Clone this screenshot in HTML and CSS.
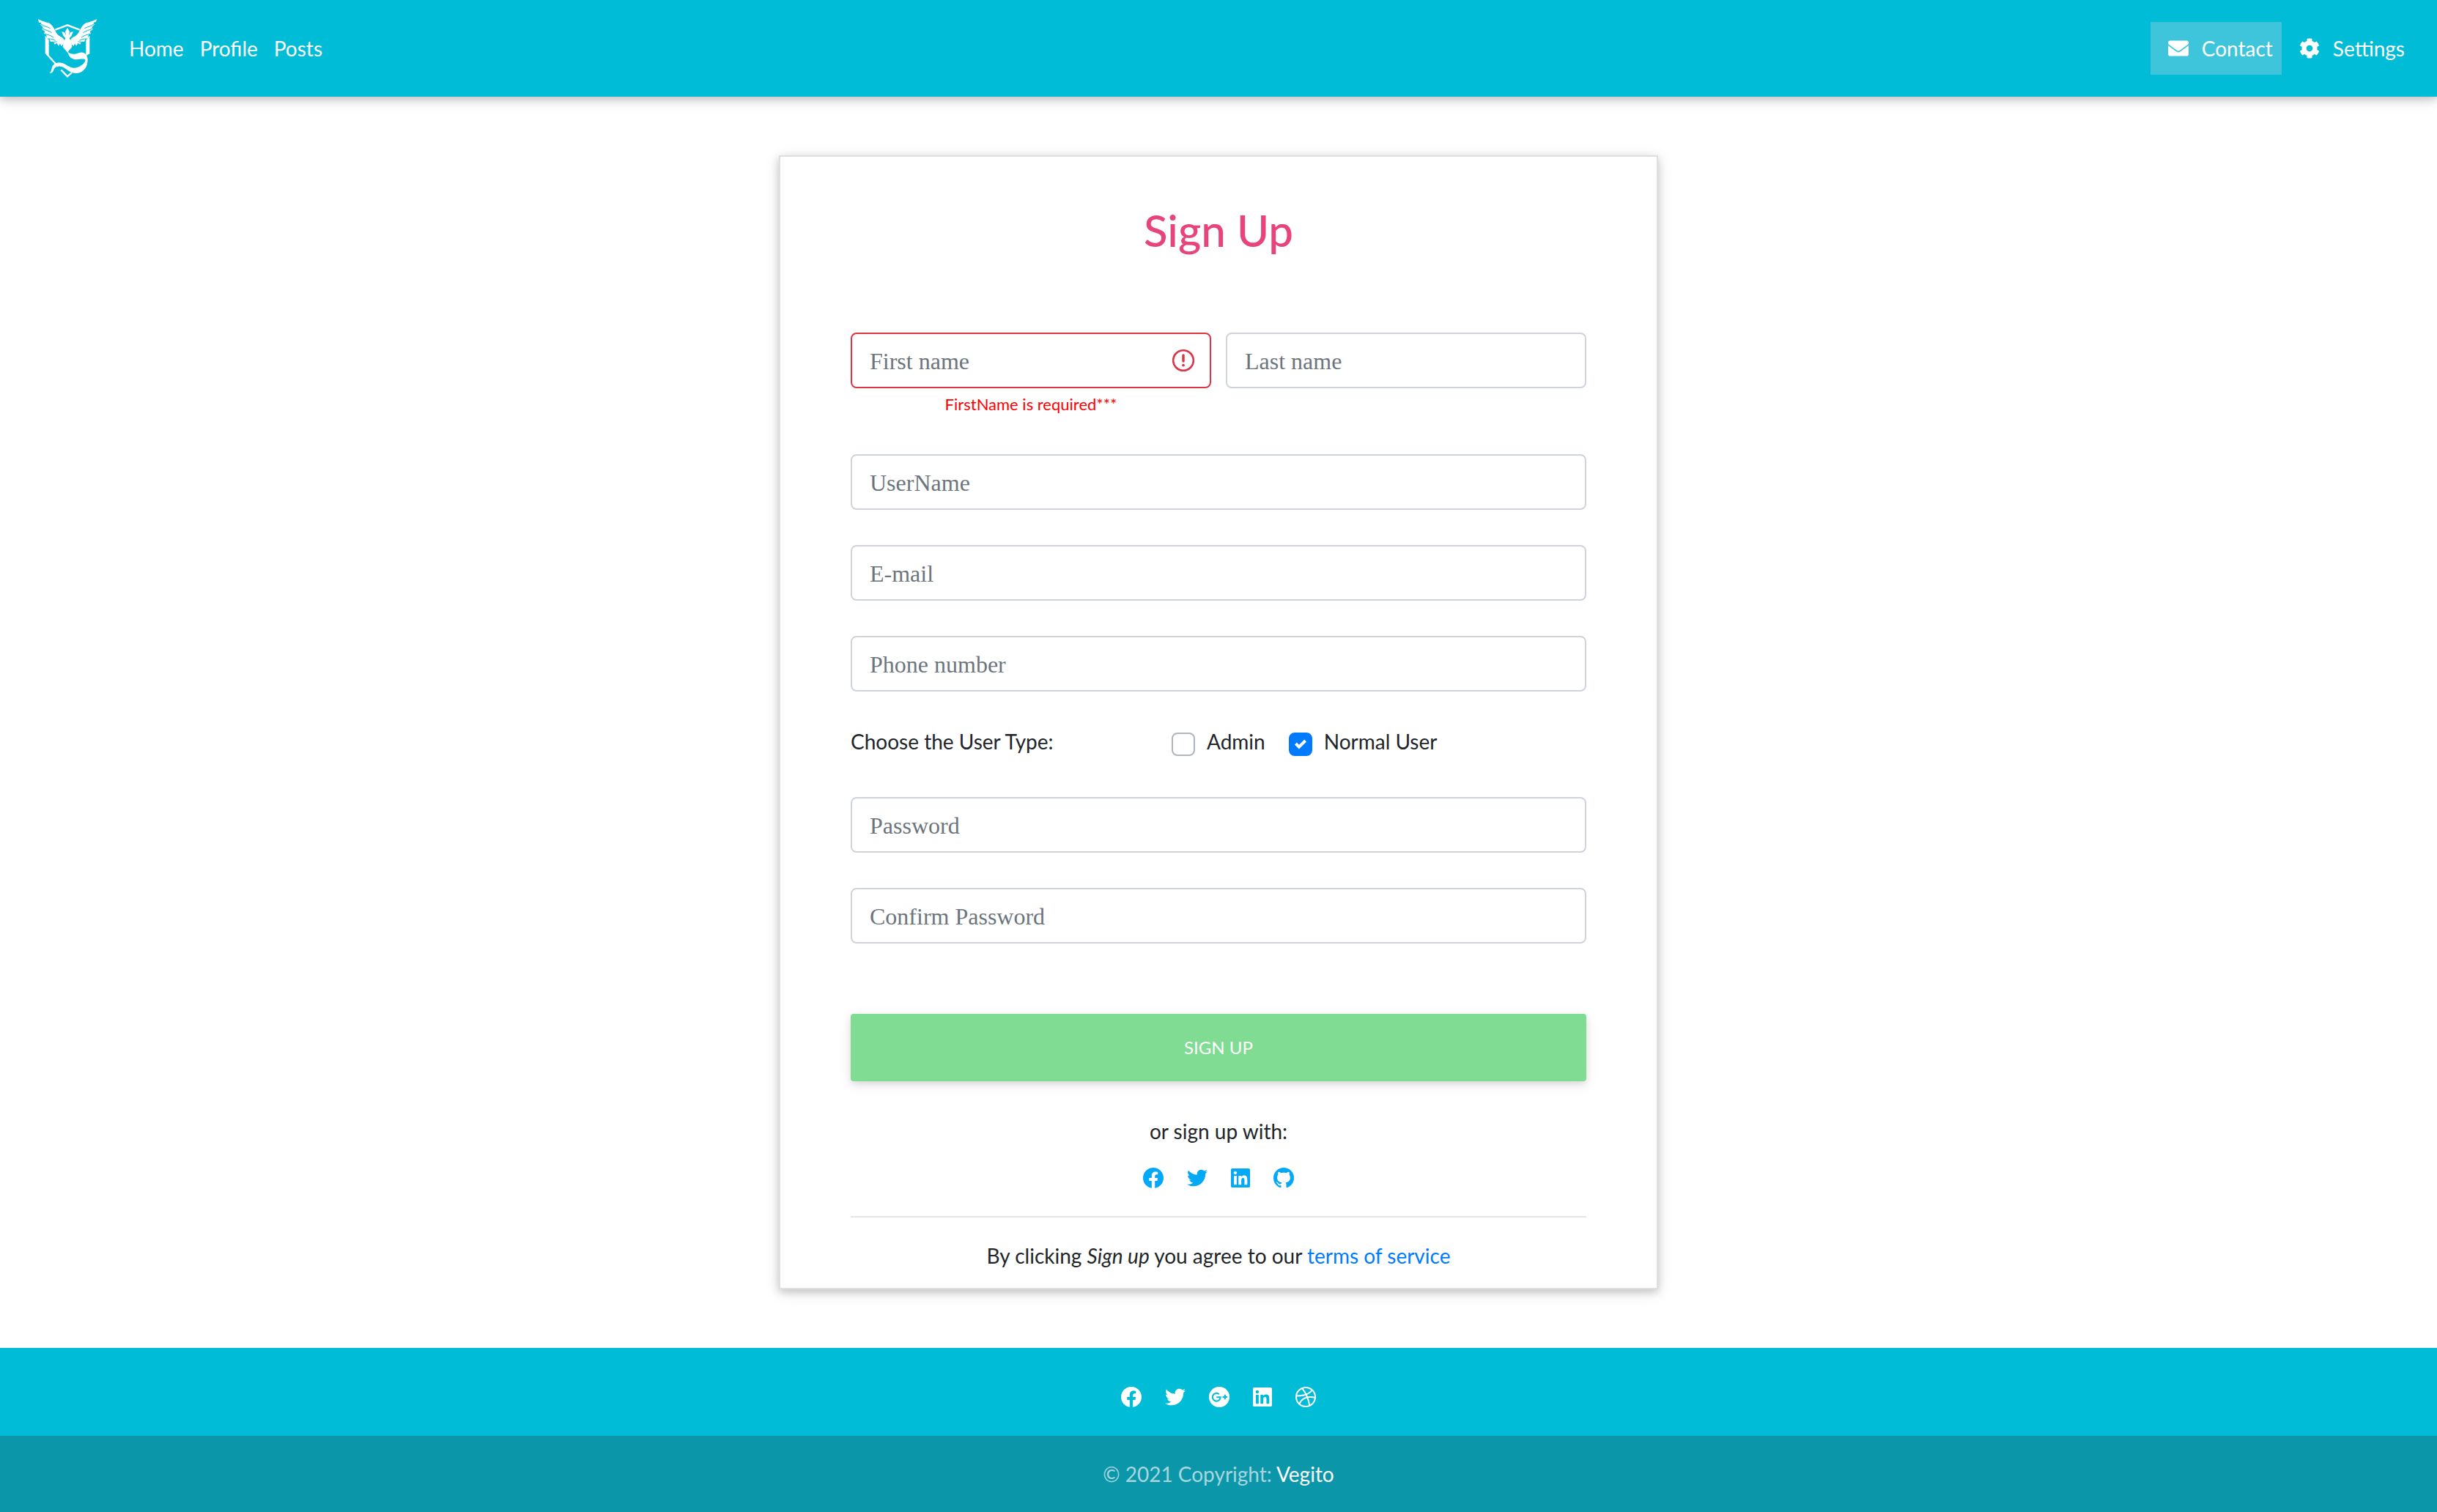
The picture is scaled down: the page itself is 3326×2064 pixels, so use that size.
FILE: index.html
```html
<!DOCTYPE html>
<html lang="en">
<head>
<meta charset="utf-8">
<title>Sign Up</title>
<link rel="stylesheet" href="styles.css">
</head>
<body>
<svg class="sprite" aria-hidden="true">
  <symbol id="facebook" viewBox="8 8 496 496"><path d="M504 256C504 119 393 8 256 8S8 119 8 256c0 123.78 90.69 226.38 209.25 245V327.69h-63V256h63v-54.64c0-62.15 37-96.48 93.67-96.48 27.14 0 55.52 4.84 55.52 4.84v61h-31.28c-30.8 0-40.41 19.12-40.41 38.73V256h68.78l-11 71.69h-57.78V501C413.31 482.38 504 379.78 504 256z"/></symbol>
  <symbol id="twitter" viewBox="0 0 512 512"><path d="M459.37 151.716c.325 4.548.325 9.097.325 13.645 0 138.72-105.583 298.558-298.558 298.558-59.452 0-114.68-17.219-161.137-47.106 8.447.974 16.568 1.299 25.34 1.299 49.055 0 94.213-16.568 130.274-44.832-46.132-.975-84.792-31.188-98.112-72.772 6.498.974 12.995 1.624 19.818 1.624 9.421 0 18.843-1.3 27.614-3.573-48.081-9.747-84.143-51.98-84.143-102.985v-1.299c13.969 7.797 30.214 12.67 47.431 13.319-28.264-18.843-46.781-51.005-46.781-87.391 0-19.492 5.197-37.36 14.294-52.954 51.655 63.675 129.3 105.258 216.365 109.807-1.624-7.797-2.599-15.918-2.599-24.04 0-57.828 46.782-104.934 104.934-104.934 30.213 0 57.502 12.67 76.67 33.137 23.715-4.548 46.456-13.32 66.599-25.34-7.798 24.366-24.366 44.833-46.132 57.827 21.117-2.273 41.584-8.122 60.426-16.243-14.292 20.791-32.161 39.308-52.628 54.253z"/></symbol>
  <symbol id="linkedin" viewBox="0 32 448 448"><path d="M416 32H31.9C14.3 32 0 46.5 0 64.3v383.4C0 465.5 14.3 480 31.9 480H416c17.6 0 32-14.5 32-32.3V64.3c0-17.8-14.4-32.3-32-32.3zM135.4 416H69V202.2h66.5V416zm-33.2-243c-21.3 0-38.5-17.3-38.5-38.5S80.9 96 102.2 96c21.2 0 38.5 17.3 38.5 38.5 0 21.3-17.2 38.5-38.5 38.5zm282.1 243h-66.4V312c0-24.8-.5-56.7-34.5-56.7-34.6 0-39.9 27-39.9 54.9V416h-66.4V202.2h63.7v29.2h.9c8.9-16.8 30.6-34.5 62.9-34.5 67.2 0 79.7 44.3 79.7 101.9V416z"/></symbol>
  <symbol id="github" viewBox="2 2 20 20"><path d="M12,2A10,10 0 0,0 2,12C2,16.42 4.87,20.17 8.84,21.5C9.34,21.58 9.5,21.27 9.5,21C9.5,20.77 9.5,20.14 9.5,19.31C6.73,19.91 6.14,17.97 6.14,17.97C5.68,16.81 5.03,16.5 5.03,16.5C4.12,15.88 5.1,15.9 5.1,15.9C6.1,15.97 6.63,16.93 6.63,16.93C7.5,18.45 8.97,18 9.54,17.76C9.63,17.11 9.89,16.67 10.17,16.42C7.95,16.17 5.62,15.31 5.62,11.5C5.62,10.39 6,9.5 6.65,8.79C6.55,8.54 6.2,7.5 6.75,6.15C6.75,6.15 7.59,5.88 9.5,7.17C10.29,6.95 11.15,6.84 12,6.84C12.85,6.84 13.71,6.95 14.5,7.17C16.41,5.88 17.25,6.15 17.25,6.15C17.8,7.5 17.45,8.54 17.35,8.79C18,9.5 18.38,10.39 18.38,11.5C18.38,15.32 16.04,16.16 13.81,16.41C14.17,16.72 14.5,17.33 14.5,18.26C14.5,19.6 14.5,20.68 14.5,21C14.5,21.27 14.66,21.59 15.17,21.5C19.14,20.16 22,16.42 22,12A10,10 0 0,0 12,2Z"/></symbol>
  <symbol id="google-plus" viewBox="0 0 28 28"><circle cx="14" cy="14" r="14"/><path d="M13.8 10.2A5.4 5.4 0 1 0 15.6 14.2H10.2M21.8 10.8v6.4M18.6 14h6.4" fill="none" stroke="#00bcd7" stroke-width="2.1"/></symbol>
  <symbol id="dribbble" viewBox="0 0 28 28"><g fill="none" stroke="currentColor" stroke-width="2"><circle cx="14" cy="14" r="13"/><path d="M9 2.2C14 8 17.500 15 19.300 25.800M1.200 12.500C9 12.700 17.500 11.500 23 4.500M5.200 23.500C9 15.500 17 12.500 27 14.800"/></g></symbol>
</svg>

<header class="navbar">
  <a class="brand" href="#" aria-label="Start page">
    <svg class="logo" viewBox="0 0 240 240" aria-hidden="true">
      <g fill="none" stroke="#fff" stroke-width="7">
        <path d="M70 44L120 25l50 19"/>
        <path d="M34 142l48 52M94 208l26 27 18-16"/>
      </g>
      <path fill="#fff" d="M29 68l15 16v66l-15-8zM211 68l-15 16v66l15-8z"/>
      <g fill="#fff">
        <path d="M0 0c20 12 44 12 58 28 12 14 13 28 25 38 10 9 25 10 24 24-1 11-8 17-12 21l-5-10-7 9-6-12-9 6-6-12-11 1-5-12-10-2-2-13-9-5 2-11-11-8 4-9-12-11 6-7L3 14z"/>
        <path d="M34 14c13 0 21 8 25 20l-9-8z"/>
        <path d="M240 0c-20 12-44 12-58 28-12 14-13 28-25 38-10 9-25 10-24 24 1 11 8 17 12 21l5-10 7 9 6-12 9 6 6-12 11 1 5-12 10-2 2-13 9-5-2-11 11-8-4-9 12-11-6-7 11-4z"/>
        <path d="M206 14c-13 0-21 8-25 20l9-8z"/>
      </g>
      <path fill="none" stroke="#00bcd7" stroke-width="3" d="M8 19c14 9 29 13 42 19M18 39c14 7 27 9 38 17M27 61c13 3 24 6 36 14M40 81c12 0 22 1 31 7M60 97c7-3 11-5 17-4M232 19c-14 9-29 13-42 19M222 39c-14 7-27 9-38 17M213 61c-13 3-24 6-36 14M200 81c-12 0-22 1-31 7M180 97c-7-3-11-5-17-4"/>
      <path fill="#fff" d="M120 36l9 15-4 17 7-14 12-2-7 16-9 11 8 13 3 22-15 18-4 5-4-5-15-18 3-22 8-13-9-11-7-16 12 2 7 14-4-17z"/>
      <path fill="#fff" d="M120 132C132 146 150 146 168 138C188 132 202 144 203 166C203 195 188 219 160 222C136 224 120 208 104 198C86 190 68 192 64 208C60 220 56 222 46 221C54 216 55 206 57 198C62 182 76 177 94 179C114 182 128 200 148 200C170 198 190 184 194 168C186 160 172 166 158 166C138 166 124 154 120 132z"/>
    </svg>
  </a>
  <nav class="menu">
    <a href="#">Home</a>
    <a href="#">Profile</a>
    <a href="#">Posts</a>
  </nav>
  <nav class="menu tools">
    <a class="tool active" href="#"><svg class="tool-icon" viewBox="0 0 512 512" aria-hidden="true"><path d="M502.3 190.8c3.9-3.1 9.7-.2 9.700 4.700V400c0 26.500-21.500 48-48 48H48c-26.500 0-48-21.500-48-48V195.600c0-5 5.700-7.800 9.700-4.700 22.400 17.400 52.100 39.500 154.100 113.600 21.100 15.400 56.700 47.800 92.200 47.600 35.700.3 72-32.800 92.300-47.600 102-74.100 131.600-96.300 154-113.700zM256 320c23.200.4 56.600-29.200 73.400-41.400 132.700-96.300 142.800-104.700 173.400-128.700 5.800-4.500 9.200-11.500 9.200-18.900v-19c0-26.500-21.500-48-48-48H48c-26.500 0-48 21.500-48 48v19c0 7.400 3.400 14.300 9.200 18.900 30.600 23.900 40.700 32.400 173.400 128.700 16.800 12.200 50.200 41.800 73.400 41.400z"/></svg>Contact</a>
    <a class="tool" href="#"><svg class="tool-icon" viewBox="0 0 512 512" aria-hidden="true"><path d="M487.4 315.7l-42.6-24.6c4.3-23.2 4.3-47 0-70.2l42.6-24.6c4.9-2.8 7.1-8.6 5.5-14-11.1-35.6-30-67.8-54.7-94.6-3.8-4.1-10-5.1-14.8-2.3L380.8 110c-17.9-15.4-38.5-27.3-60.8-35.1V25.8c0-5.600-3.9-10.500-9.400-11.700-36.700-8.200-74.300-7.800-109.200 0-5.500 1.200-9.400 6.100-9.400 11.700V75c-22.200 7.900-42.800 19.800-60.800 35.100L88.700 85.500c-4.900-2.800-11-1.900-14.800 2.300-24.700 26.700-43.600 58.900-54.700 94.600-1.700 5.400.6 11.200 5.500 14L67.300 221c-4.300 23.200-4.300 47 0 70.200l-42.600 24.600c-4.900 2.800-7.100 8.600-5.500 14 11.100 35.600 30 67.800 54.700 94.600 3.800 4.100 10 5.100 14.800 2.300l42.600-24.600c17.900 15.400 38.500 27.300 60.800 35.100v49.200c0 5.600 3.900 10.500 9.400 11.700 36.700 8.200 74.300 7.800 109.200 0 5.500-1.200 9.400-6.100 9.400-11.700v-49.200c22.200-7.900 42.800-19.800 60.800-35.100l42.600 24.600c4.900 2.800 11 1.900 14.800-2.300 24.700-26.700 43.600-58.900 54.700-94.600 1.500-5.500-.7-11.300-5.600-14.100zM256 336c-44.100 0-80-35.900-80-80s35.900-80 80-80 80 35.900 80 80-35.900 80-80 80z"/></svg>Settings</a>
  </nav>
</header>

<main class="page">
  <section class="card">
    <h1 class="title">Sign Up</h1>
    <form class="form">
      <div class="names">
        <div class="name">
          <input class="field invalid" type="text" placeholder="First name" aria-label="First name" aria-describedby="first-error">
          <p class="error" id="first-error">FirstName is required***</p>
        </div>
        <div class="name">
          <input class="field" type="text" placeholder="Last name" aria-label="Last name">
        </div>
      </div>
      <input class="field" type="text" placeholder="UserName" aria-label="UserName">
      <input class="field" type="email" placeholder="E-mail" aria-label="E-mail">
      <input class="field" type="tel" placeholder="Phone number" aria-label="Phone number">
      <div class="user-type" role="group" aria-labelledby="type-label">
        <span id="type-label">Choose the User Type:</span>
        <div class="choices">
          <label class="choice"><input class="tick" type="checkbox">Admin</label>
          <label class="choice"><input class="tick" type="checkbox" checked>Normal User</label>
        </div>
      </div>
      <input class="field" type="password" placeholder="Password" aria-label="Password">
      <input class="field" type="password" placeholder="Confirm Password" aria-label="Confirm Password">
      <button class="submit" type="submit">SIGN UP</button>
    </form>
    <p class="alternative">or sign up with:</p>
    <div class="social">
      <a href="#" aria-label="Facebook"><svg><use href="#facebook"/></svg></a>
      <a href="#" aria-label="Twitter"><svg><use href="#twitter"/></svg></a>
      <a href="#" aria-label="LinkedIn"><svg class="square"><use href="#linkedin"/></svg></a>
      <a href="#" aria-label="GitHub"><svg><use href="#github"/></svg></a>
    </div>
    <hr class="rule">
    <p class="terms">By clicking <em>Sign up</em> you agree to our <a href="#">terms of service</a></p>
  </section>
</main>

<footer class="footer">
  <div class="social social-light">
    <a href="#" aria-label="Facebook"><svg><use href="#facebook"/></svg></a>
    <a href="#" aria-label="Twitter"><svg><use href="#twitter"/></svg></a>
    <a href="#" aria-label="Google Plus"><svg><use href="#google-plus"/></svg></a>
    <a href="#" aria-label="LinkedIn"><svg class="square"><use href="#linkedin"/></svg></a>
    <a href="#" aria-label="Dribbble"><svg><use href="#dribbble"/></svg></a>
  </div>
  <p class="copyright">© 2021 Copyright: <a href="#">Vegito</a></p>
</footer>
</body>
</html>
```

FILE: styles.css
```css
* {
  box-sizing: border-box;
}

body {
  margin: 0;
  background: #fff;
  color: #212529;
  font-family: Lato, "Open Sans", sans-serif;
  font-size: 28px;
  line-height: 40px;
}

h1,
p {
  margin: 0;
}

a {
  color: #007bff;
  text-decoration: none;
}

svg {
  display: block;
  fill: currentColor;
}

.sprite {
  display: none;
}

/* Top bar */
.navbar {
  display: flex;
  align-items: center;
  height: 132px;
  padding: 0 32px 0 52px;
  background: #00bcd7;
  box-shadow: 0 4px 10px rgba(0, 0, 0, 0.16), 0 4px 20px rgba(0, 0, 0, 0.12);
}

.logo {
  width: 80px;
  height: 80px;
}

.menu {
  display: flex;
  gap: 22px;
  margin-left: 44px;
}

.menu a {
  color: #fff;
}

.tools {
  gap: 0;
  margin-left: auto;
}

.tool {
  display: flex;
  align-items: center;
  gap: 18px;
  height: 72px;
  padding: 0 12px 0 24px;
}

.tool-icon {
  width: 28px;
  height: 28px;
}

.active {
  background: #3ec5db;
}

/* Sign up card */
.page {
  padding: 80px 0;
}

.card {
  width: 1200px;
  max-width: 100%;
  margin: 0 auto;
  padding: 62px 96px 24px;
  border: 2px solid #dfdfdf;
  box-shadow: 0 4px 10px rgba(0, 0, 0, 0.16), 0 4px 20px rgba(0, 0, 0, 0.12);
  text-align: center;
}

.title {
  margin-bottom: 102px;
  color: #e8447b;
  font-size: 60px;
  font-weight: 500;
  line-height: 76px;
}

.form {
  display: flex;
  flex-direction: column;
  gap: 48px;
}

.names {
  display: grid;
  grid-template-columns: 1fr 1fr;
  gap: 20px;
}

.field {
  display: block;
  width: 100%;
  height: 76px;
  padding: 2px 24px 0;
  border: 2px solid #ced4da;
  border-radius: 8px;
  background: #fff;
  color: #495057;
  font-family: "Liberation Serif", serif;
  font-size: 32px;
}

.field::placeholder {
  color: #6c757d;
  opacity: 1;
}

.invalid {
  border-color: #dc3545;
  background: #fff url("data:image/svg+xml,%3Csvg xmlns='http://www.w3.org/2000/svg' viewBox='0 0 32 32' fill='none' stroke='%23dc3545'%3E%3Ccircle cx='16' cy='16' r='13.8' stroke-width='2.6'/%3E%3Cpath d='M16 9v8' stroke-width='3.4' stroke-linecap='round'/%3E%3Ccircle cx='16' cy='22.6' r='1.9' fill='%23dc3545' stroke='none'/%3E%3C/svg%3E") no-repeat right 20px center / 32px 32px;
}

.error {
  padding: 4px 0 2px;
  color: #f00;
  font-size: 22px;
  line-height: 36px;
}

.user-type {
  display: grid;
  grid-template-columns: 438px auto;
  align-items: start;
  height: 48px;
  text-align: left;
}

.choices {
  display: flex;
  gap: 32px;
}

.choice {
  display: flex;
  gap: 16px;
}

.tick {
  width: 32px;
  height: 32px;
  margin: 8px 0 0;
  appearance: none;
  border: 2px solid #adb5bd;
  border-radius: 8px;
  background: #fff;
}

.tick:checked {
  border-color: #007bff;
  background: #007bff url("data:image/svg+xml,%3Csvg xmlns='http://www.w3.org/2000/svg' viewBox='0 0 8 8'%3E%3Cpath fill='%23fff' d='M6.564.75l-3.590 3.612-1.538-1.550L0 4.260 2.974 7.250 8 2.193z'/%3E%3C/svg%3E") no-repeat center / 16px 16px;
}

.submit {
  height: 92px;
  margin-top: 48px;
  border: 0;
  border-radius: 4px;
  background: #7fdc92;
  box-shadow: 0 4px 10px rgba(0, 0, 0, 0.1), 0 4px 20px rgba(0, 0, 0, 0.08);
  color: #fff;
  font: inherit;
  font-size: 24px;
}

.alternative {
  margin-top: 48px;
}

/* Rows of social links */
.social {
  display: flex;
  justify-content: center;
  gap: 32px;
  margin-top: 30px;
  color: #03a9f4;
}

.social a {
  color: inherit;
}

.social svg {
  width: 28px;
  height: 28px;
}

.social .square {
  width: 26px;
}

.rule {
  margin: 38px 0 32px;
  border: 0;
  border-top: 2px solid #e5e5e5;
}

/* Footer */
.footer {
  background: #00bcd7;
  text-align: center;
}

.social-light {
  align-items: center;
  height: 120px;
  margin: 0;
  padding-top: 14px;
  color: #fff;
}

.copyright {
  padding: 32px 0;
  background: #0b96aa;
  color: #a6d6de;
}

.copyright a {
  color: #fff;
}
```
